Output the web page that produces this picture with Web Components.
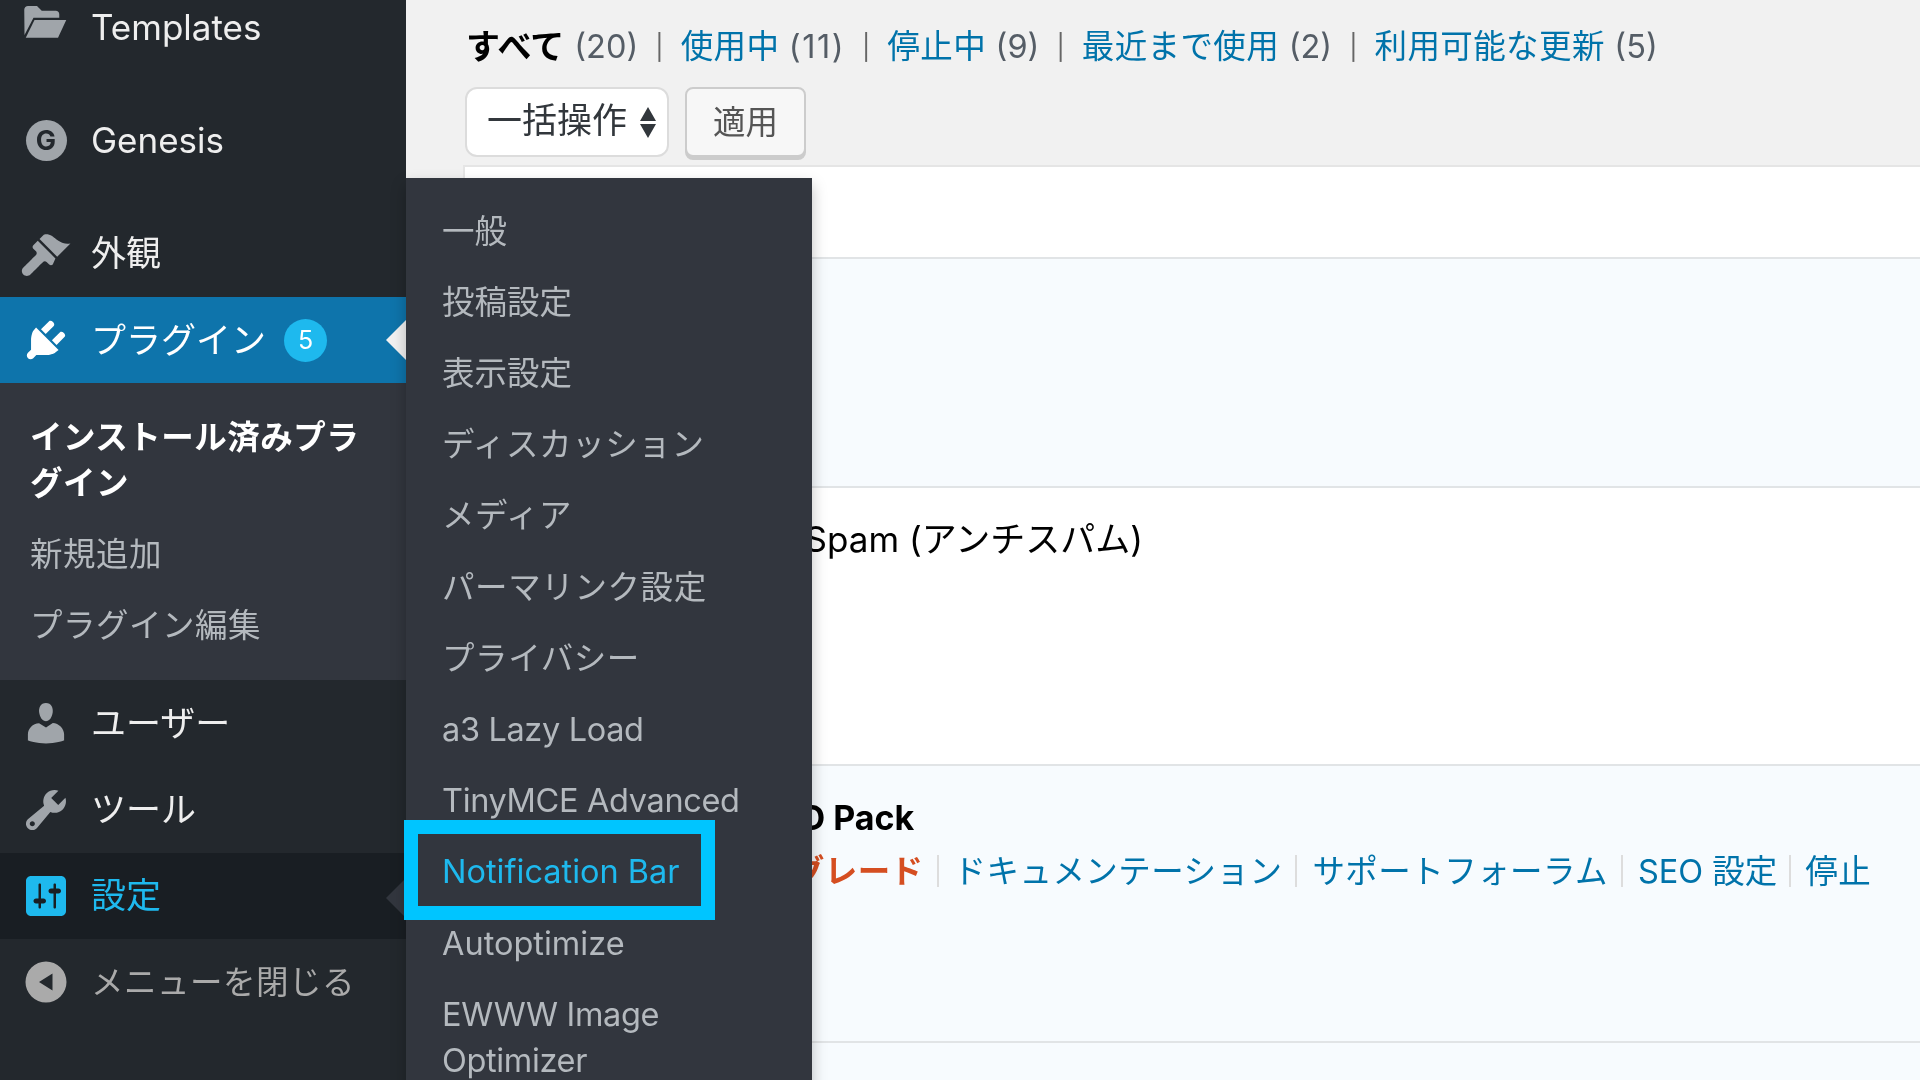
<!DOCTYPE html>
<html lang="ja">
<head>
<meta charset="utf-8">
<title>プラグイン</title>
<style>
  html, body { margin: 0; height: 100%; overflow: hidden; background: #f1f1f1; }
  body { font-family: Inter, "Noto Sans CJK JP", sans-serif; }
  svg { display: block; }
</style>
</head>
<body>
<admin-shell>
  <side-menu slot="side">
    <menu-item>
      <svg slot="icon" viewBox="0 0 20 20" fill="currentColor"><path d="M1.3 3.1C1.3 2.2 2 1.6 2.8 1.6h3.6L8.3 3.5h5.6c.8 0 1.4.6 1.4 1.4v1.4H5L1.4 13.2z"/><path d="M5.4 7.2h12.7L14.8 14.3H1.9z"/></svg>
      Templates
    </menu-item>
    <menu-item>
      <letter-icon slot="icon">G</letter-icon>
      Genesis
    </menu-item>
    <menu-item>
      <svg slot="icon" viewBox="0 0 20 20" fill="currentColor"><path d="M14.48 11.06L7.41 3.99l1.5-1.5c.5-.56 2.3-.47 3.51.32 1.21.8 1.43 1.28 2.91 2.1 1.18.64 2.45 1.26 4.45.85zm-.71.71L6.7 4.7 4.93 6.47c-.39.39-.39 1.02 0 1.41l1.06 1.06c.39.39.39 1.03 0 1.42-.6.6-5.06 5.06-5.06 5.06-.78.78-.78 2.04 0 2.82.78.78 2.04.78 2.82 0 0 0 4.46-4.46 5.06-5.06.39-.39 1.03-.39 1.42 0l1.06 1.06c.39.39 1.02.39 1.41 0z"/></svg>
      外観
    </menu-item>
    <menu-item state="open" badge="5">
      <svg slot="icon" viewBox="0 0 20 20" fill="currentColor"><path d="M13.11 4.36L9.87 7.6 8 5.73l3.24-3.24c.35-.34 1.05-.2 1.56.32.52.51.66 1.21.31 1.55zm-8 1.77l.91-1.12 9.01 9.01-1.19.84c-.71.71-2.63 1.16-3.82 1.16H6.14L4.9 17.26c-.59.59-1.54.59-2.12 0-.59-.58-.59-1.53 0-2.12l1.24-1.24v-3.88c0-1.13.4-3.19 1.09-3.89zm7.26 3.97l3.24-3.24c.34-.35 1.04-.21 1.55.31.52.51.66 1.21.31 1.55l-3.24 3.25z"/></svg>
      プラグイン
    </menu-item>
    <side-submenu>
      <sub-item current>インストール済みプラグイン</sub-item>
      <sub-item>新規追加</sub-item>
      <sub-item>プラグイン編集</sub-item>
    </side-submenu>
    <menu-item>
      <svg slot="icon" viewBox="0 0 20 20" fill="currentColor"><path d="M10 9.25c-2.27 0-2.73-3.44-2.73-3.44C7 4.02 7.82 2 9.97 2c2.16 0 2.98 2.02 2.71 3.81 0 0-.41 3.44-2.68 3.44zm0 2.57L12.72 10c2.39 0 4.52 2.33 4.52 4.53v2.49s-3.65 1.13-7.24 1.13c-3.65 0-7.24-1.13-7.24-1.13v-2.49c0-2.25 1.94-4.48 4.47-4.48z"/></svg>
      ユーザー
    </menu-item>
    <menu-item>
      <svg slot="icon" viewBox="0 0 20 20" fill="currentColor"><path fill-rule="evenodd" d="M16.68 9.77c-1.34 1.34-3.3 1.67-4.95.99l-5.41 6.52c-.99.99-2.59.99-3.58 0s-.99-2.59 0-3.57l6.52-5.42c-.68-1.65-.35-3.61.99-4.95 1.28-1.28 3.12-1.62 4.72-1.06l-2.89 2.89 2.82 2.82 2.86-2.87c.53 1.58.18 3.39-1.08 4.67zM3.81 16.21c.4.39 1.04.39 1.43 0 .4-.4.4-1.04 0-1.43-.39-.4-1.03-.4-1.43 0-.39.39-.39 1.03 0 1.43z"/></svg>
      ツール
    </menu-item>
    <menu-item state="hover">
      <svg slot="icon" viewBox="0 0 20 20" fill="currentColor"><path fill-rule="evenodd" d="M18 16V4c0-1.1-.9-2-2-2H4c-1.1 0-2 .9-2 2v12c0 1.1.9 2 2 2h12c1.1 0 2-.9 2-2zM8 11h1c.55 0 1 .45 1 1s-.45 1-1 1H8v1.5c0 .28-.22.5-.5.5s-.5-.22-.5-.5V13H6c-.55 0-1-.45-1-1s.45-1 1-1h1V5.5c0-.28.22-.5.5-.5s.5.22.5.5V11zm5-2h-1c-.55 0-1-.45-1-1s.45-1 1-1h1V5.5c0-.28.22-.5.5-.5s.5.22.5.5V7h1c.55 0 1 .45 1 1s-.45 1-1 1h-1v5.5c0 .28-.22.5-.5.5s-.5-.22-.5-.5V9z"/></svg>
      設定
    </menu-item>
    <menu-item state="collapse">
      <svg slot="icon" viewBox="0 0 20 20" fill="currentColor"><path fill-rule="evenodd" d="M10 1.8a8.2 8.2 0 1 0 0 16.4 8.2 8.2 0 0 0 0-16.4zM12.6 6.6v6.8L7.2 10z"/></svg>
      メニューを閉じる
    </menu-item>
  </side-menu>

  <view-filter slot="main"></view-filter>
  <bulk-bar slot="main"></bulk-bar>
  <plugin-table slot="main">
    <plugin-row style="height:92px"></plugin-row>
    <plugin-row active style="height:229px"></plugin-row>
    <plugin-row style="height:278px; --title-left:116px; --title-size:35px">Akismet Anti-Spam (アンチスパム)</plugin-row>
    <plugin-row active style="height:277px; --title-left:125px; --title-size:34px">
      <strong>All in One SEO Pack</strong>
      <row-actions slot="actions">
        <a class="upgrade">Pro にアップグレード</a>
        <a>ドキュメンテーション</a>
        <a>サポートフォーラム</a>
        <a>SEO 設定</a>
        <a>停止</a>
      </row-actions>
    </plugin-row>
    <plugin-row active style="height:60px"></plugin-row>
  </plugin-table>

  <fly-menu slot="fly">
    <fly-item>一般</fly-item>
    <fly-item>投稿設定</fly-item>
    <fly-item>表示設定</fly-item>
    <fly-item kana>ディスカッション</fly-item>
    <fly-item kana>メディア</fly-item>
    <fly-item kana>パーマリンク設定</fly-item>
    <fly-item kana>プライバシー</fly-item>
    <fly-item tight>a3 Lazy Load</fly-item>
    <fly-item tight>TinyMCE Advanced</fly-item>
    <fly-item marked>Notification Bar</fly-item>
    <fly-item>Autoptimize</fly-item>
    <fly-item tight>EWWW Image Optimizer</fly-item>
  </fly-menu>
</admin-shell>

<script>
// small helper so every element below is just a class + a string of markup
function shadow(el, html) {
  el.attachShadow({ mode: 'open' }).innerHTML = html;
}

class AdminShell extends HTMLElement {
  constructor() {
    super();
    shadow(this, `
    <style>
      /* the reference is an upscaled capture, so everything is a little soft */
      :host { display: grid; grid-template-columns: 406px 1fr; width: 1920px; height: 1080px; position: relative; overflow: hidden; filter: blur(.5px); }
      .side { background: #23282d; overflow: hidden; }
      .main { background: #f1f1f1; padding: 23px 0 0 57px; overflow: hidden; min-width: 0; }
      .fly { position: absolute; left: 406px; top: 178px; }
    </style>
    <div class="side"><slot name="side"></slot></div>
    <div class="main"><slot name="main"></slot></div>
    <div class="fly"><slot name="fly"></slot></div>`);
  }
}

class SideMenu extends HTMLElement {
  constructor() {
    super();
    shadow(this, `
    <style>
      :host { display: block; margin-top: -16px; }
      ::slotted(menu-item:nth-child(-n+2)) { margin-bottom: 27px; }
    </style>
    <slot></slot>`);
  }
}

class MenuItem extends HTMLElement {
  constructor() {
    super();
    const badge = this.getAttribute('badge');
    shadow(this, `
    <style>
      :host { display: flex; align-items: center; height: 86.3px; position: relative; color: #eee; font-size: 35px; line-height: 45px; }
      .icon { width: 50px; height: 50px; margin-left: 21px; margin-right: 20px; color: #a0a5aa; flex: none; }
      ::slotted(svg) { width: 50px; height: 50px; }
      .badge { width: 43px; height: 43px; border-radius: 50%; margin-left: 18px; background: #1eb9ee; color: #fff; font-size: 25px; line-height: 43px; text-align: center; }
      :host([state=open]) { background: #0e74ab; color: #fff; }
      :host([state=open]) .icon { color: #fff; }
      :host([state=hover]) { background: #191e23; color: #1eb9ee; }
      :host([state=hover]) .icon { color: #1eb9ee; }
      :host([state=collapse]) { color: #aaa; font-size: 32.5px; letter-spacing: .5px; }
      :host([state=collapse]) .icon { color: #aaa; }
      .arrow { display: none; position: absolute; right: 0; top: 50%; margin-top: -20px; border: 20px solid transparent; border-left: 0; }
      :host([state=open]) .arrow { display: block; border-right-color: #f1f1f1; }
      :host([state=hover]) .arrow { display: block; border-right-color: #32363e; margin-top: -18px; }
    </style>
    <span class="icon"><slot name="icon"></slot></span>
    <span><slot></slot></span>
    ${badge ? `<span class="badge">${badge}</span>` : ''}
    <span class="arrow"></span>`);
  }
}

class LetterIcon extends HTMLElement {
  constructor() {
    super();
    shadow(this, `
    <style>
      :host { display: block; width: 41px; height: 41px; margin: 4.5px; border-radius: 50%; background: #a0a5aa; color: #23282d; font-size: 27px; font-weight: 700; line-height: 41px; text-align: center; }
    </style>
    <slot></slot>`);
  }
}

class SideSubmenu extends HTMLElement {
  constructor() {
    super();
    shadow(this, `
    <style>
      :host { display: block; background: #32363e; padding: 19.5px 0 18.5px; }
    </style>
    <slot></slot>`);
  }
}

class SubItem extends HTMLElement {
  constructor() {
    super();
    shadow(this, `
    <style>
      :host { display: block; padding: 12.5px 30px; color: #b4b9be; font-size: 32.5px; line-height: 46px; letter-spacing: .5px; }
      :host([current]) { color: #fff; font-weight: 700; }
    </style>
    <slot></slot>`);
  }
}

class FlyMenu extends HTMLElement {
  constructor() {
    super();
    shadow(this, `
    <style>
      :host { display: block; width: 405.5px; background: #32363e; padding: 18px 0; box-shadow: 0 7px 14px rgba(0,0,0,.25); }
    </style>
    <slot></slot>`);
  }
}

class FlyItem extends HTMLElement {
  constructor() {
    super();
    shadow(this, `
    <style>
      :host { display: block; position: relative; padding: 12.5px 36px; color: #b4b9be; font-size: 32.5px; line-height: 46.2px; }
      :host([kana]) { letter-spacing: .6px; }
      :host([tight]) { letter-spacing: -.35px; }
      :host([marked]) { color: #1eb9ee; }
      :host([marked])::after { content: ""; position: absolute; left: -2px; top: -17px; width: 311px; height: 100px; box-sizing: border-box; border: 14.5px solid #00c5ff; }
    </style>
    <slot></slot>`);
  }
}

class ViewFilter extends HTMLElement {
  constructor() {
    super();
    const views = [['すべて', '20'], ['使用中', '11'], ['停止中', '9'], ['最近まで使用', '2'], ['利用可能な更新', '5']];
    shadow(this, `
    <style>
      :host { display: flex; align-items: center; height: 46px; padding: 1px 0 0 3px; margin-bottom: -1px; font-size: 32.5px; line-height: 46px; color: #555d66; white-space: nowrap; }
      a { color: #0073aa; margin-right: 9.5px; letter-spacing: .4px; }
      a.on { color: #000; font-weight: 700; font-size: 34px; margin-right: 10px; letter-spacing: 0; }
      span.wide { letter-spacing: 1.5px; }
      i { font-style: normal; font-size: 25px; color: #666; margin: 0 17px 0 17px; }
    </style>
    ${views.map((v, i) => `<a class="${i ? '' : 'on'}">${v[0]}</a><span class="${v[1] === '11' ? 'wide' : ''}">(${v[1]})</span>${i < 4 ? '<i>|</i>' : ''}`).join('')}`);
  }
}

class BulkBar extends HTMLElement {
  constructor() {
    super();
    shadow(this, `
    <style>
      :host { display: flex; align-items: flex-start; gap: 16px; margin: 18px 0 5px 2px; height: 73px; }
      .select { display: flex; align-items: center; justify-content: space-between; box-sizing: border-box; width: 204px; height: 70px; padding: 0 11px 0 20px; background: #fff; border: 2.5px solid #dcdcdc; border-radius: 12px; color: #32373c; font-size: 35px; }
      .select span { padding-bottom: 10px; }
      .button { box-sizing: border-box; width: 121px; height: 70px; background: #f7f7f7; border: 2.5px solid #ccc; border-radius: 8px; box-shadow: 0 3px 0 #ccc; color: #555; font-size: 32.5px; line-height: 68px; text-align: center; }
    </style>
    <div class="select"><span>一括操作</span>
      <svg width="16" height="31" viewBox="0 0 16 31" fill="#32373c"><path d="M8 0l8 14H0zM8 31L0 17h16z"/></svg>
    </div>
    <div class="button">適用</div>`);
  }
}

class PluginTable extends HTMLElement {
  constructor() {
    super();
    shadow(this, `
    <style>
      :host { display: block; background: #fff; border-top: 2px solid #e5e5e5; border-left: 2px solid #e5e5e5; }
    </style>
    <slot></slot>`);
  }
}

class PluginRow extends HTMLElement {
  constructor() {
    super();
    shadow(this, `
    <style>
      :host { display: block; box-sizing: border-box; border-bottom: 2.5px solid #e1e4e6; padding: 29px 0 0 var(--title-left, 138px); color: #000; font-size: var(--title-size, 32.5px); line-height: 45px; white-space: nowrap; }
      :host([active]) { background: #f7fbfe; }
      ::slotted(strong) { font-weight: 700; }
    </style>
    <slot></slot>
    <slot name="actions"></slot>`);
  }
}

class RowActions extends HTMLElement {
  constructor() {
    super();
    shadow(this, `
    <style>
      :host { display: flex; margin: 9px 0 0 7px; color: #0073aa; font-size: 32.5px; letter-spacing: .45px; }
      ::slotted(a) { padding-right: 15px; margin-right: 15px; background: linear-gradient(#ddd, #ddd) right 6px / 2px 32px no-repeat; }
      ::slotted(a:nth-child(4)) { letter-spacing: 0; padding-right: 14px; margin-right: 14px; }
      ::slotted(a:last-child) { background: none; }
      ::slotted(a.upgrade) { color: #d54e21; font-weight: 700; }
    </style>
    <slot></slot>`);
  }
}

customElements.define('admin-shell', AdminShell);
customElements.define('side-menu', SideMenu);
customElements.define('menu-item', MenuItem);
customElements.define('letter-icon', LetterIcon);
customElements.define('side-submenu', SideSubmenu);
customElements.define('sub-item', SubItem);
customElements.define('fly-menu', FlyMenu);
customElements.define('fly-item', FlyItem);
customElements.define('view-filter', ViewFilter);
customElements.define('bulk-bar', BulkBar);
customElements.define('plugin-table', PluginTable);
customElements.define('plugin-row', PluginRow);
customElements.define('row-actions', RowActions);
</script>
</body>
</html>
